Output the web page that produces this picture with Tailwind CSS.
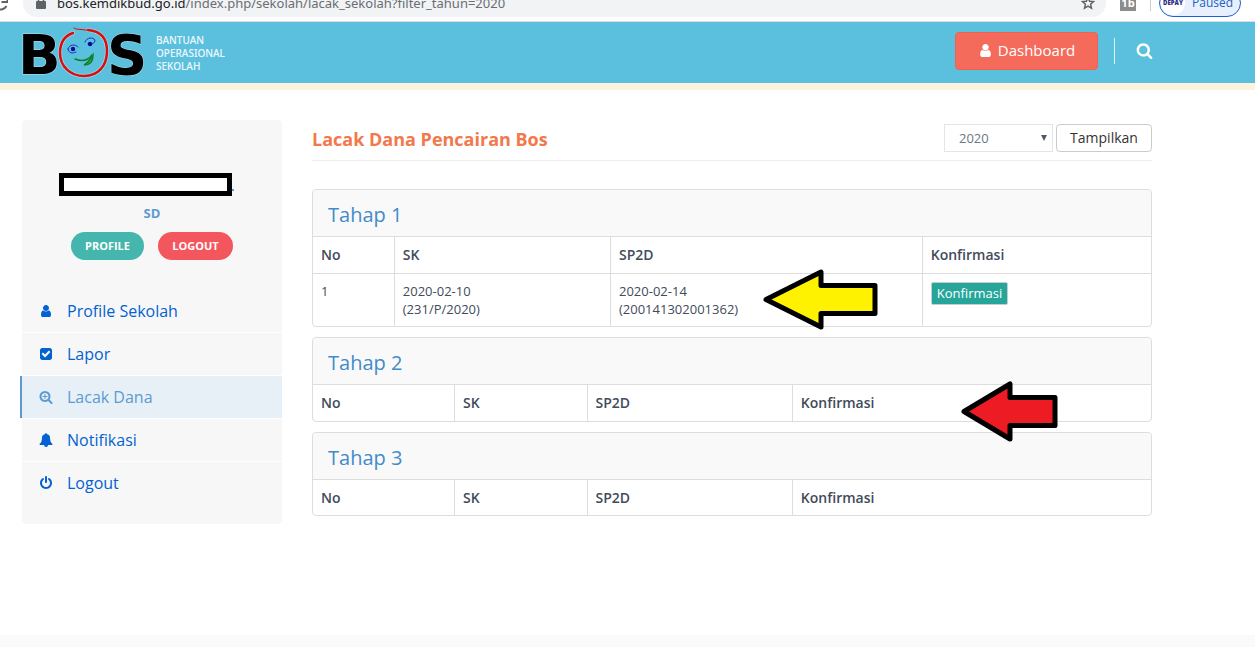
<!DOCTYPE html>
<html lang="id">
<head>
<meta charset="utf-8">
<meta name="viewport" content="width=device-width, initial-scale=1">
<title>BOS - Lacak Dana</title>
<script src="https://cdn.jsdelivr.net/npm/@tailwindcss/browser@4"></script>
</head>
<body class="min-h-screen flex flex-col bg-white font-['Open_Sans',sans-serif] text-[#414b5a]">

<!-- Browser toolbar -->
<div class="h-[22px] shrink-0 flex items-end overflow-hidden border-b border-[#dadcdf] pb-1 bg-white text-[13px]">
  <div class="w-[23px] shrink-0 flex justify-start">
    <svg class="w-4 h-7 -ml-2" viewBox="0 0 16 28" fill="none" stroke="#5f6368" stroke-width="2"><path d="M14.500 17A6.500 6.500 0 1 1 13.500 9.500M15.500 7v6h-6"/></svg>
  </div>
  <div class="h-7 flex-1 min-w-0 flex items-center rounded-full bg-[#f1f3f4] pl-[13px] pr-[11px]">
    <svg class="w-[10px] h-[14px] shrink-0" viewBox="0 0 10 14"><rect y="5" width="10" height="8" rx="1" fill="#5f6368"/><path d="M2.500 5V3.500a2.500 2.500 0 0 1 5 0V5" fill="none" stroke="#5f6368" stroke-width="1.500"/></svg>
    <span class="ml-[11px] pt-px flex-1 truncate font-['Noto_Sans',sans-serif] text-[#6a6e73]"><span class="text-[#202124]">bos.kemdikbud.go.id</span>/index.php/sekolah/lacak_sekolah?filter_tahun=2020</span>
    <svg class="w-[14px] h-[14px] shrink-0" viewBox="0 0 14 14" fill="none" stroke="#5f6368" stroke-width="1.500"><path d="M7 1.500 8.600 5.200l4 .4-3 2.700.9 4L7 10.200l-3.500 2.100.9-4-3-2.700 4-.4z"/></svg>
  </div>
  <div class="ml-[14px] mb-[6px] h-4 w-4 shrink-0 bg-[#8c8c8c] text-white text-[11px] leading-4 font-bold text-center">1b</div>
  <div class="ml-[14px] mb-[6px] h-4 w-px shrink-0 bg-[#c9ccd0]"></div>
  <button class="ml-2 mr-[14px] h-7 w-[82px] shrink-0 flex items-center rounded-full border border-[#1a62d0] bg-[#e8f0fe] text-[12px] text-[#2360c4]">
    <span class="ml-px h-6 w-6 shrink-0 rounded-full bg-white text-[6px] leading-6 font-extrabold text-[#2b2a86] text-center">DEPAY</span>
    <span class="ml-[7px]">Paused</span>
  </button>
</div>

<!-- Site header -->
<header class="h-[68px] shrink-0 flex items-center bg-[#5bc0de] border-b-[7px] border-[#fcf2de] pl-5 pr-[102px]">
  <a href="#" class="flex items-center gap-2" aria-label="Bantuan Operasional Sekolah">
    <svg class="w-32 h-[58px]" viewBox="0 0 128 58">
      <g fill="#000" stroke="#fff" stroke-width="1" stroke-opacity=".5" paint-order="stroke" font-family="DejaVu Sans" font-weight="bold" font-size="56">
        <text x="-2" y="50">B</text><text x="87" y="50">S</text>
      </g>
      <g fill="none" stroke-linecap="round">
        <path d="M53 9C44 12 40 19 40 29c0 13 10 23 24 23s23-10 23-25C87 14 80 7 68 6" stroke="#fff" stroke-opacity=".4" stroke-width="4"/>
        <path d="M53 9C44 12 40 19 40 29c0 13 10 23 24 23s23-10 23-25C87 14 80 7 68 6" stroke="#dd0c0c" stroke-width="2.500"/>
        <path d="M54 4l2 1 5 .5M61 5.500l8 1" stroke="#dd0c0c" stroke-width="1"/>
        <path d="M48 25c1-5 8-5 10-2M48 25c1 4 4 5 8 3M65 18c2-5 8-5 10-2 0 3-3 5-7 4" stroke="#1d2fb0" stroke-width="1"/>
        <path d="M55 35c8 3 13 2 17-4" stroke="#12802a" stroke-width="1.500"/>
        <path d="M73 31c0 7-3 10-9 10 4-2 6-5 9-10z" fill="#2fb36a" stroke="#12802a" stroke-width="1.500"/>
      </g>
      <circle cx="53" cy="25" r="2.200" fill="#0a0aa0"/><circle cx="70" cy="20" r="2.200" fill="#0a0aa0"/>
    </svg>
    <span class="block pt-px font-['Noto_Sans',sans-serif] text-[10px] leading-[13px] font-medium text-white/90">BANTUAN<br>OPERASIONAL<br>SEKOLAH</span>
  </a>
  <div class="ml-auto pb-1 flex items-center">
    <a href="#" class="h-[38px] w-[143px] flex items-center justify-center gap-[5px] rounded-[4px] border border-[#f2604f] bg-[#f56b5b] text-[15px] text-white">
      <svg class="w-[15px] h-[15px]" viewBox="0 0 1792 1792" fill="currentColor"><path d="M1536 1399q0 109-62.500 187t-150.500 78h-854q-88 0-150.500-78t-62.500-187q0-85 8.500-160.500t31.500-152 58.500-131 94-89 134.500-34.500q131 128 313 128t313-128q76 0 134.500 34.500t94 89 58.500 131 31.500 152 8.500 160.500zm-256-887q0 159-112.500 271.500t-271.500 112.500-271.500-112.500-112.500-271.500 112.500-271.500 271.500-112.500 271.500 112.500 112.500 271.500z"/></svg>
      Dashboard
    </a>
    <span class="ml-4 h-[26px] w-px bg-white/80"></span>
    <button class="ml-[21px] text-white" aria-label="Cari">
      <svg class="w-[17px] h-[17px]" viewBox="0 0 1792 1792" fill="currentColor"><path d="M1216 832q0-185-131.500-316.500t-316.500-131.500-316.500 131.500-131.500 316.500 131.500 316.500 316.500 131.500 316.500-131.500 131.500-316.500zm512 832q0 52-38 90t-90 38q-54 0-90-38l-343-342q-179 124-399 124-143 0-273.500-55.500t-225-150-150-225-55.500-273.500 55.500-273.500 150-225 225-150 273.500-55.500 273.500 55.500 225 150 150 225 55.500 273.500q0 220-124 399l343 343q37 37 37 90z"/></svg>
    </button>
  </div>
</header>

<div class="flex-1 flex items-start gap-[30px] pt-[30px] pb-8 pl-[22px] pr-[103px]">

  <!-- Sidebar -->
  <aside class="w-[260px] shrink-0 rounded-[4px] bg-[#f7f7f7] pt-[53px] pb-5">
    <div class="flex justify-center items-end pr-[13px]">
      <div class="h-[23px] w-[173px] border-[5px] border-black bg-white"></div>
      <div class="h-[2px] w-[2px] mb-[5px] -mr-[2px] bg-[#5b9bd1]"></div>
    </div>
    <p class="mt-2 text-center text-[13px] leading-[18px] font-bold text-[#5b9bd1]">SD</p>
    <div class="mt-[10px] flex justify-center gap-[14px] text-[11px] font-bold text-white">
      <a href="#" class="h-7 w-[73px] rounded-full bg-[#44b6ae] flex items-center justify-center">PROFILE</a>
      <a href="#" class="h-7 w-[75px] rounded-full bg-[#f3565d] flex items-center justify-center">LOGOUT</a>
    </div>
    <nav class="mt-[30px] text-[16px] text-[#0362d1]">
      <a href="#" class="h-[43px] flex items-center gap-[14px] pl-[17px] border-b border-white">
        <svg class="w-[14px] h-[14px]" viewBox="0 0 1792 1792" fill="currentColor"><path d="M1536 1399q0 109-62.500 187t-150.500 78h-854q-88 0-150.500-78t-62.500-187q0-85 8.500-160.500t31.500-152 58.500-131 94-89 134.500-34.500q131 128 313 128t313-128q76 0 134.500 34.500t94 89 58.500 131 31.500 152 8.500 160.500zm-256-887q0 159-112.500 271.500t-271.500 112.500-271.500-112.500-112.500-271.500 112.500-271.500 271.500-112.500 271.500 112.500 112.500 271.500z"/></svg>Profile Sekolah</a>
      <a href="#" class="h-[43px] flex items-center gap-[14px] pl-[17px] border-b border-white">
        <svg class="w-[14px] h-[14px]" viewBox="0 0 1792 1792" fill="currentColor"><path d="M813 1299l614-614q19-19 19-45t-19-45l-102-102q-19-19-45-19t-45 19l-467 467-211-211q-19-19-45-19t-45 19l-102 102q-19 19-19 45t19 45l358 358q19 19 45 19t45-19zm851-883v960q0 119-84.500 203.500t-203.500 84.500h-960q-119 0-203.500-84.500t-84.500-203.500v-960q0-119 84.500-203.500t203.500-84.500h960q119 0 203.500 84.500t84.500 203.500z"/></svg>Lapor</a>
      <div class="border-b border-white"><a href="#" class="h-[42px] -ml-[2px] flex items-center gap-[14px] pl-[17px] border-l-2 border-[#5b9bd1] bg-[#e8f0f7] text-[#5b9bd1]">
        <svg class="w-[14px] h-[14px]" viewBox="0 0 1792 1792" fill="currentColor"><path d="M1088 800v64q0 13-9.500 22.500t-22.500 9.500h-224v224q0 13-9.500 22.500t-22.500 9.500h-64q-13 0-22.500-9.500t-9.500-22.500v-224h-224q-13 0-22.500-9.500t-9.500-22.500v-64q0-13 9.500-22.500t22.500-9.500h224v-224q0-13 9.500-22.500t22.500-9.500h64q13 0 22.500 9.500t9.500 22.500v224h224q13 0 22.500 9.500t9.500 22.500zm128 32q0-185-131.500-316.500t-316.500-131.500-316.500 131.500-131.500 316.500 131.500 316.500 316.500 131.500 316.500-131.500 131.500-316.500zm512 832q0 52-38 90t-90 38q-54 0-90-38l-343-342q-179 124-399 124-143 0-273.500-55.500t-225-150-150-225-55.500-273.500 55.500-273.500 150-225 225-150 273.500-55.500 273.500 55.500 225 150 150 225 55.500 273.500q0 220-124 399l343 343q37 37 37 90z"/></svg>Lacak Dana</a></div>
      <a href="#" class="h-[43px] flex items-center gap-[14px] pl-[17px] border-b border-white">
        <svg class="w-[14px] h-[14px]" viewBox="0 0 1792 1792" fill="currentColor"><path d="M912 1696q0-16-16-16-59 0-101.500-42.500t-42.500-101.500q0-16-16-16t-16 16q0 73 51.500 124.500t124.500 51.500q16 0 16-16zm816-288q0 52-38 90t-90 38h-448q0 106-75 181t-181 75-181-75-75-181h-448q-52 0-90-38t-38-90q50-42 91-88t85-119.500 74.500-158.500 50-206 19.500-260q0-152 117-282.500t307-158.500q-8-19-8-39 0-40 28-68t68-28 68 28 28 68q0 20-8 39 190 28 307 158.500t117 282.500q0 139 19.500 260t50 206 74.500 158.500 85 119.500 91 88z"/></svg>Notifikasi</a>
      <a href="#" class="h-[42px] flex items-center gap-[14px] pl-[17px]">
        <svg class="w-[14px] h-[14px]" viewBox="0 0 1792 1792" fill="currentColor"><path d="M1664 896q0 156-61 298t-164 245-245 164-298 61-298-61-245-164-164-245-61-298q0-182 80.500-343t226.500-270q43-32 95.500-25t83.500 50q32 42 24.500 94.500t-49.500 84.500q-98 74-151.500 181t-53.500 228q0 104 40.500 198.500t109.500 163.500 163.500 109.500 198.500 40.500 198.500-40.500 163.500-109.500 109.500-163.500 40.500-198.500q0-121-53.500-228t-151.500-181q-42-32-49.500-84.500t24.500-94.500q31-43 84-50t95 25q146 109 226.500 270t80.500 343zm-640-768v640q0 52-38 90t-90 38-90-38-38-90v-640q0-52 38-90t90-38 90 38 38 90z"/></svg>Logout</a>
    </nav>
  </aside>

  <!-- Content -->
  <main class="flex-1 min-w-0">
    <div class="h-[41px] flex items-center justify-between border-b border-[#eee] pb-1">
      <h1 class="pt-[2px] text-[18px] font-bold text-[#f3784b]">Lacak Dana Pencairan Bos</h1>
      <form class="flex gap-[3px]">
        <label for="tahun" class="sr-only">Tahun</label>
        <div class="relative">
          <select id="tahun" class="h-7 w-[109px] appearance-none border border-[#e3e5e8] bg-white pl-[14px] pt-px text-[13px] text-[#6c7683]"><option>2020</option></select>
          <svg class="absolute right-[6px] top-[11px] w-[6px] h-[6px] pointer-events-none" viewBox="0 0 6 6"><path d="M0 0h6L3 6z" fill="#4d5b69"/></svg>
        </div>
        <button type="button" class="h-7 w-24 rounded-[4px] border border-[#ccc] bg-white pb-px text-[14px] text-[#333]">Tampilkan</button>
      </form>
    </div>

    <div class="mt-7 flex flex-col gap-[10px]">
      <section class="relative rounded-[4px] border border-[#ddd]">
        <h2 class="h-[46px] pl-[15px] pt-1 flex items-center rounded-t-[4px] bg-[#f9f9f9] text-[20px] text-[#428bca]">Tahap 1</h2>
        <table class="w-full table-fixed text-left border-t border-[#ddd]">
          <thead class="text-[14px]">
            <tr class="h-[37px]">
              <th class="w-[9.7%] px-2 pb-[2px] font-semibold">No</th>
              <th class="w-[25.8%] px-2 pb-[2px] font-semibold border-l border-[#ddd]">SK</th>
              <th class="w-[37.2%] px-2 pb-[2px] font-semibold border-l border-[#ddd]">SP2D</th>
              <th class="px-2 pb-[2px] font-semibold border-l border-[#ddd]">Konfirmasi</th>
            </tr>
          </thead>
          <tbody class="text-[13px] leading-[18px] align-top">
            <tr class="border-t border-[#ddd]">
              <td class="px-2 py-2">1</td>
              <td class="px-2 py-2 border-l border-[#ddd]">2020-02-10<br>(231/P/2020)</td>
              <td class="px-2 py-2 border-l border-[#ddd]">2020-02-14<br>(200141302001362)</td>
              <td class="px-2 py-2 border-l border-[#ddd]"><button class="block h-[23px] px-[5px] pb-px rounded-[2px] border border-[#c8cccb] bg-[#26a69a] text-white">Konfirmasi</button></td>
            </tr>
          </tbody>
        </table>
        <svg class="absolute left-[449px] top-[78px] w-[118px] h-[62px]" viewBox="0 0 118 62"><path d="M4 31.500 59 4v13.500h54v28H59V59z" fill="#fff200" stroke="#000" stroke-width="5" stroke-linejoin="round"/></svg>
      </section>

      <section class="relative rounded-[4px] border border-[#ddd]">
        <h2 class="h-[46px] pl-[15px] pt-1 flex items-center rounded-t-[4px] bg-[#f9f9f9] text-[20px] text-[#428bca]">Tahap 2</h2>
        <table class="w-full table-fixed text-left border-t border-[#ddd]">
          <thead class="text-[14px]">
            <tr class="h-9">
              <th class="w-[16.9%] px-2 font-semibold">No</th>
              <th class="w-[15.8%] px-2 font-semibold border-l border-[#ddd]">SK</th>
              <th class="w-[24.5%] px-2 font-semibold border-l border-[#ddd]">SP2D</th>
              <th class="px-2 font-semibold border-l border-[#ddd]">Konfirmasi</th>
            </tr>
          </thead>
        </table>
        <svg class="absolute left-[647px] top-[42px] w-[100px] h-[62px]" viewBox="0 0 100 62"><path d="M4 31.500 50 4v13.500h45v28H50V59z" fill="#ed1c24" stroke="#000" stroke-width="5" stroke-linejoin="round"/></svg>
      </section>

      <section class="rounded-[4px] border border-[#ddd]">
        <h2 class="h-[46px] pl-[15px] pt-1 flex items-center rounded-t-[4px] bg-[#f9f9f9] text-[20px] text-[#428bca]">Tahap 3</h2>
        <table class="w-full table-fixed text-left border-t border-[#ddd]">
          <thead class="text-[14px]">
            <tr class="h-9">
              <th class="w-[16.9%] px-2 font-semibold">No</th>
              <th class="w-[15.8%] px-2 font-semibold border-l border-[#ddd]">SK</th>
              <th class="w-[24.5%] px-2 font-semibold border-l border-[#ddd]">SP2D</th>
              <th class="px-2 font-semibold border-l border-[#ddd]">Konfirmasi</th>
            </tr>
          </thead>
        </table>
      </section>
    </div>
  </main>
</div>

<footer class="h-3 shrink-0 bg-[#fafafa]"></footer>
</body>
</html>
